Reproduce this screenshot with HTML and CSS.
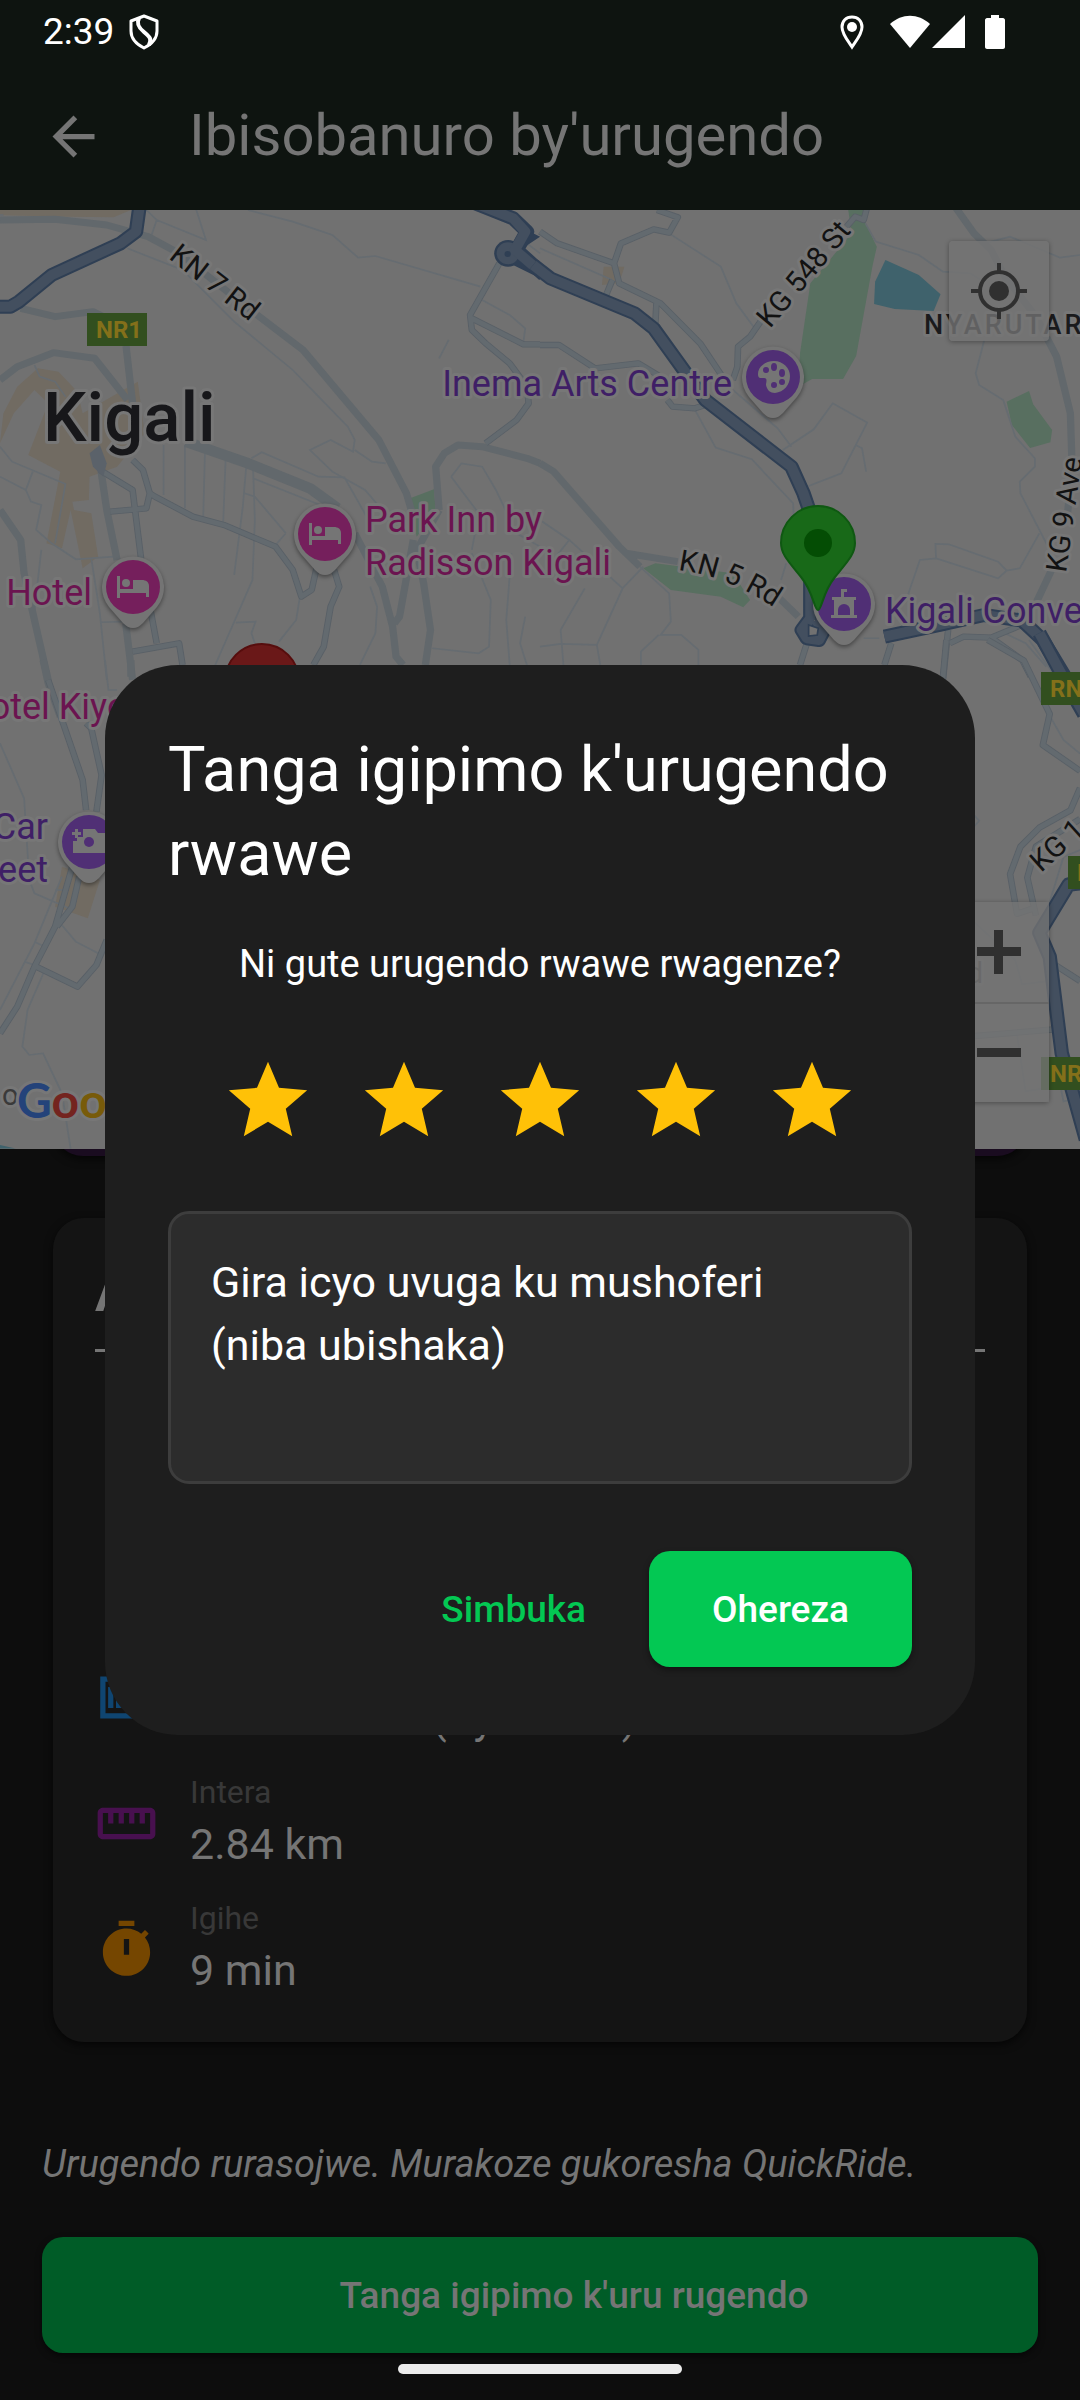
FILE: index.html
```html
<!DOCTYPE html>
<html lang="rw">
<head>
<meta charset="utf-8">
<meta name="viewport" content="width=device-width, initial-scale=1">
<title>Ibisobanuro by'urugendo</title>
<link rel="stylesheet" href="styles.css">
</head>
<body>
<div class="screen">
  <header class="top">
    <div class="status">
      <span class="status-time">2:39</span>
      <svg class="status-icon" width="30" height="36" viewBox="0 0 30 36" fill="none" stroke="#fff" stroke-width="3" stroke-linejoin="round"><path d="M15 2 2 7v10c0 8 5 13 13 17 8-4 13-9 13-17V7z"/><path d="M10 4c-3 6 0 10 5 14 6 5 8 7 5 13" stroke-width="4"/></svg>
      <span class="status-right">
        <svg width="24" height="36" viewBox="0 0 24 36"><path d="M12 3C6 3 2 7 2 13c0 7 6 14 10 20 4-6 10-13 10-20 0-6-4-10-10-10z" fill="none" stroke="#fff" stroke-width="3"/><circle cx="12" cy="13" r="5" fill="#fff"/></svg>
        <svg class="wifi" width="40" height="34" viewBox="0 0 40 34" fill="#fff"><path d="M20 33 0 9C12-2 28-2 40 9z"/></svg>
        <svg class="cell" width="34" height="34" viewBox="0 0 34 34" fill="#fff"><path d="M33 0v33H0z"/></svg>
        <svg class="battery" width="20" height="36" viewBox="0 0 20 36" fill="#fff"><path d="M6 1h8v3h4c1 0 2 1 2 2v27c0 1-1 2-2 2H2c-1 0-2-1-2-2V6c0-1 1-2 2-2h4z"/></svg>
      </span>
    </div>
    <div class="appbar">
      <button class="icon-btn" type="button" aria-label="Subira inyuma"><svg width="63" height="63" viewBox="0 0 24 24" fill="#757575"><path d="M20 11H7.83l5.59-5.59L12 4l-8 8 8 8 1.41-1.41L7.83 13H20v-2z"/></svg></button>
      <h1 class="appbar-title">Ibisobanuro by'urugendo</h1>
    </div>
  </header>

  <section class="map" aria-label="Ikarita">
    <svg class="map-svg" viewBox="0 210 1080 939">
      <defs>
        <path id="drop" d="M0 41C-4 41-7 39-10 36L-24 20A31 31 0 1 1 24 20L10 36C7 39 4 41 0 41z"/>
        <g id="bed" fill="#757575"><path d="M-16-11h3v13H0v-9H9c4 0 7 2 7 6v11h-3V6h-26v5h-3z"/><circle cx="-7" cy="-4" r="4"/></g>
        <path id="kn5" d="M678 570Q732 577 780 612"/>
      </defs>
      <rect y="210" width="1080" height="939" fill="#717171"/>

      <!-- north west -->
      <g transform="matrix(.3444 0 0 .3333 0 200)">
        <path class="tan" d="M0 30H380L330 52 200 50 0 46zM0 730 10 640 50 560 110 505 170 515 225 575 240 640 400 545 420 700 340 800 260 830 258 900 210 905 215 930 265 940 285 1070 240 1105 205 930 180 1045 135 1030 175 815 82 765 140 610 100 570 40 640z"/>
        <path class="park" d="M1185 897 1260 868 1265 930 1210 1010z"/>
        <path class="lane" d="M425 30 455 60 440 105M455 60 598 120 570 30M370 145 530 210 680 365 850 510 1010 680 1030 720 1025 755 960 720 900 750 965 815 1060 870 1110 930M720 30 850 65 965 105 1040 173 1090 168 1395 260M1400 300 1480 345 1525 385 1520 425M1030 750 1080 785 1120 790M475 735V885M537 735V925M595 760 590 955M655 780 648 970M715 800 705 920 680 1125M735 810 740 960 733 1140 625 1395M735 835 930 915M730 775 760 757 925 830 1000 832 1070 960M710 880 740 890 830 1000M0 740 35 785 190 852 160 1030M95 815 75 870 90 905 120 915 105 990 150 1030 220 1078 330 1070M0 830 75 870M120 1050 100 1230M265 1075 290 1240 310 1440M290 1267 360 1265M685 1268 742 1265 730 1300 740 1330M800 1035 830 1000M870 1195 860 1260 810 1325M1075 1160 1095 1220 1090 1300 1045 1395M1255 1345 1390 1360 1420 1340 1425 1200 1370 1060M1310 830 1340 790 1400 800 1440 870 1500 1000 1568 1040M1310 830 1390 940 1370 1050M1485 1060 1470 1260 1480 1395M1275 475 1303 420M100 495 115 530 160 545 190 590M0 45 10 45M1530 130 1568 160M1525 1250 1510 1330 1530 1395"/>
        <path class="road" d="M0 60 160 58 310 75 430 110 520 160 740 340 880 450 1100 720 1180 880 1200 950M60 325 160 350 270 335 300 350M0 540 50 500 155 458 275 475 370 600M366 438 385 610M290 790 310 930 340 1080M365 1270 385 1440M0 930 60 1020 70 1120 100 1260 140 1440M1030 1000 1110 1160 1140 1280 1150 1370 1170 1395M1200 1020 1160 1250 1145 1270M1275 930 1210 1050 1230 1150 1250 1290 1235 1395M1275 930 1265 800 1290 760 1330 735 1400 740 1530 775 1568 790"/>
        <path class="road wide" d="M540 725 720 790 900 865 980 925"/>
        <path class="street-case" d="M290 810 385 870 410 1080 455 1330M385 780 415 810 435 880 450 890 560 950 650 975 800 1040 850 1110 875 1190 905 1170 920 1100M320 935 425 925 435 880M385 1355 520 1330 530 1395M970 1110 985 1160 960 1220 940 1340 910 1395M1450 190 1365 345 1370 390 1410 430 1480 490 1530 560 1535 610 1500 660 1410 730M1370 355 1520 433 1568 433"/>
        <path class="street" d="M290 810 385 870 410 1080 455 1330M385 780 415 810 435 880 450 890 560 950 650 975 800 1040 850 1110 875 1190 905 1170 920 1100M320 935 425 925 435 880M385 1355 520 1330 530 1395M970 1110 985 1160 960 1220 940 1340 910 1395M1450 190 1365 345 1370 390 1410 430 1480 490 1530 560 1535 610 1500 660 1410 730M1370 355 1520 433 1568 433"/>
        <path d="M260 760 290 735 310 790 300 830 270 800z" fill="#5b626a"/>
        <path class="hwy-case" d="M405 20 395 95 350 130 150 225 55 305 30 320H0"/>
        <path class="hwy" d="M405 20 395 95 350 130 150 225 55 305 30 320H0"/>
        <path class="hwy-case" d="M1380 10 1490 55 1530 95 1500 150 1580 225"/>
        <circle cx="1475" cy="160" r="40" fill="#2f3f54"/>
        <path d="M1470 150 1530 90 1568 110 1510 150 1580 205 1568 235 1460 180z" fill="#2f3f54"/>
        <circle cx="1475" cy="160" r="33" fill="#434f5f"/>
        <path class="hwy" d="M1380 10 1490 55 1525 95 1495 150 1580 225"/>
        <circle cx="1474" cy="162" r="9" fill="#2f3f54"/>
      </g>

      <!-- north east -->
      <g transform="matrix(.3444 0 0 .3333 540 200)">
        <path class="tan" d="M185 200H245L230 250 180 255z"/>
        <path class="park" d="M895 30H955L945 70 978 140 965 200 918 468 880 537H790L750 560 755 460 785 250 905 100zM1355 605 1420 573 1432 613 1487 690 1482 727 1423 744 1370 675zM300 1105 335 1090 560 1120 610 1200 590 1222 525 1190 380 1170z"/>
        <path d="M1003 180 1100 225 1163 283 1143 333 1030 327 970 312 973 245z" fill="#3f626c"/>
        <path class="lane" d="M375 100 525 200 570 310 620 380M0 145 210 240M945 70 975 125 1100 165 1170 215 1250 220 1280 240M1290 130 1365 110 1510 173 1568 165M1290 420 1265 520 1275 555 1345 600 1380 710 1437 775V800L1393 845 1395 880 1480 1050M450 630 510 743 615 778 735 910 737 960M705 750 795 688 850 610 950 668 875 820 780 858M560 570 690 685 730 740M917 735 935 745 947 815M1450 1000 1393 1105 1355 1112 1330 1135 1150 1075 1148 1032 1187 1033 1330 1085 1355 1112M1150 1075 1103 1080 1060 1210M715 1090 700 1140M0 960 85 1020 240 1165M85 1020 0 1130M290 1100 375 1180 380 1265 350 1305H410L460 1350V1395M345 1305 293 1355V1395M300 1100 240 1165 165 1335 175 1395M130 1165 60 1290 68 1395M0 1340 60 1332 165 1335M1350 1300 1410 1330 1470 1400M940 1315H985"/>
        <path class="road" d="M1205 20 1260 100 1310 150 1350 230 1440 350 1500 470 1540 640 1545 800 1530 960M0 790 40 815 230 1040 290 1100M250 1060 400 1085M690 1190 750 1250M1490 1100 1440 1210"/>
        <path class="street-case" d="M0 95 50 130 215 190 230 250 350 310 465 430 530 530M215 190 235 130 330 88 375 98 400 52 340 30M210 240 190 290M338 310 335 370M0 435H55L160 505 285 490 350 530M640 365 610 410 575 440 573 500 560 540M950 20 940 60 915 50 890 80M370 600 385 620 450 625 480 615M775 1330 755 1395M1020 1330 1000 1395M1185 1290 1170 1440M1190 1330 1230 1310 1310 1313 1410 1270M1310 1313 1400 1380 1425 1430"/>
        <path class="street" d="M0 95 50 130 215 190 230 250 350 310 465 430 530 530M215 190 235 130 330 88 375 98 400 52 340 30M210 240 190 290M338 310 335 370M0 435H55L160 505 285 490 350 530M640 365 610 410 575 440 573 500 560 540M950 20 940 60 915 50 890 80M370 600 385 620 450 625 480 615M775 1330 755 1395M1020 1330 1000 1395M1185 1290 1170 1440M1190 1330 1230 1310 1310 1313 1410 1270M1310 1313 1400 1380 1425 1430"/>
        <path class="hwy-case" d="M-20 195 30 235 275 340 330 385 480 600 730 800 765 880 785 940V1260M785 1255 760 1290 775 1315 810 1320 825 1290 800 1260M1000 1310 1160 1275 1290 1245 1400 1262 1460 1320 1530 1440"/>
        <path class="hwy" d="M-20 195 30 235 275 340 330 385 480 600 730 800 765 880 785 940V1260M785 1255 760 1290 775 1315 810 1320 825 1290 800 1260M1000 1310 1160 1275 1290 1245 1400 1262 1460 1320 1530 1440"/>
        <path d="M780 1275 808 1285 805 1305 780 1308z" fill="#717171" stroke="#2f3f54" stroke-width="5"/>
      </g>

      <!-- south west -->
      <g transform="matrix(.3444 0 0 .3333 0 660)">
        <path class="tan" d="M180 620 290 660 255 775 160 740z"/>
        <path class="lane" d="M0 250 70 415 85 660 100 700 200 745M180 650 100 850 0 1050M160 690H200M130 930 80 1050 65 1160 85 1185 125 1180 180 1300 205 1466M175 790 220 845 285 880M305 0 315 90H340M100 845 130 860M70 905 100 915"/>
        <path class="road" d="M125 0 140 70 175 170M380 0V50"/>
        <path class="street-case" d="M140 60 180 180 240 360 250 450M250 190 265 205 295 345 280 455M210 620 160 800 100 920 50 1040 0 1120M230 650 210 740 165 800M105 920 225 980 280 915 310 840"/>
        <path class="street" d="M140 60 180 180 240 360 250 450M250 190 265 205 295 345 280 455M210 620 160 800 100 920 50 1040 0 1120M230 650 210 740 165 800M105 920 225 980 280 915 310 840"/>
        <path d="M0 1455 45 1466H0z" fill="#3f626c"/>
      </g>

      <!-- south east -->
      <g transform="matrix(.3444 0 0 .3444 540 640)">
        <path class="lane" d="M1420 0 1500 110 1550 200M1480 220 1520 290 1568 330M1262 510 1275 525 1262 540M1568 610 1520 630 1480 760M1262 820 1380 930 1400 1000 1480 990M1385 1145 1410 1310 1480 1300M1500 1240 1520 1340 1540 1335"/>
        <path class="street-case" d="M1180 0 1170 110M1300 0 1405 60 1480 215 1460 305 1568 380M1568 430 1540 495 1450 545 1395 600 1365 680 1385 795 1430 780M1568 520 1440 600 1415 690 1440 800M1262 1150 1500 1130M1490 940 1568 990"/>
        <path class="street" d="M1180 0 1170 110M1300 0 1405 60 1480 215 1460 305 1568 380M1568 430 1540 495 1450 545 1395 600 1365 680 1385 795 1430 780M1568 520 1440 600 1415 690 1440 800M1262 1150 1500 1130M1490 940 1568 990"/>
        <path class="hwy-case" d="M1450-20 1520 110 1580 215M1580 705 1535 710 1450 850 1480 920 1515 1200 1585 1450"/>
        <path class="hwy" d="M1450-20 1520 110 1580 215M1580 705 1535 710 1450 850 1480 920 1515 1200 1585 1450"/>
      </g>

      <g class="badge">
        <rect x="87" y="313" width="60" height="33"/><text x="96" y="338">NR1</text>
        <rect x="1041" y="672" width="60" height="33"/><text x="1050" y="697">RN</text>
        <rect x="1068" y="856" width="60" height="33"/><text x="1077" y="881">R</text>
        <rect x="1041" y="1057" width="60" height="33"/><text x="1050" y="1082">NR</text>
      </g>

      <g class="halo">
        <text class="city" x="43" y="441">Kigali</text>
        <g class="street-name">
          <text transform="translate(168 258) rotate(38)">KN 7 Rd</text>
          <text transform="translate(770 329) rotate(-50)">KG 548 St</text>
          <text><textPath href="#kn5">KN 5 Rd</textPath></text>
          <text transform="translate(1066 573) rotate(-82)">KG 9 Ave</text>
          <text transform="translate(1041 873) rotate(-42)">KG 1</text>
          <text x="983" y="983" text-anchor="end" opacity=".5">KG 7 Rd</text>
          <text class="faint" x="2" y="1105">o</text>
        </g>
        <text class="district" x="924" y="334">NYARUTARAMA</text>
        <g class="hotel">
          <text x="365" y="532">Park Inn by</text>
          <text x="365" y="575">Radisson Kigali</text>
          <text x="92" y="605" text-anchor="end">Hotel</text>
          <text x="-36" y="719">Hotel Kiyovu</text>
        </g>
        <g class="place">
          <text x="732" y="396" text-anchor="end">Inema Arts Centre</text>
          <text x="885" y="623">Kigali Convention</text>
          <text x="48" y="839" text-anchor="end">Car</text>
          <text x="48" y="882" text-anchor="end">Free Street</text>
        </g>
        <text class="brand" x="17" y="1118"><tspan fill="#24437a">G</tspan><tspan fill="#74241f">o</tspan><tspan fill="#785b0a">o</tspan><tspan fill="#24437a">g</tspan><tspan fill="#1f5a2f">l</tspan><tspan fill="#74241f">e</tspan></text>
      </g>

      <g class="pins">
        <g transform="translate(133 587)"><use href="#drop"/><circle r="27" fill="#751f5c"/><use href="#bed"/></g>
        <g transform="translate(325 534)"><use href="#drop"/><circle r="27" fill="#751f5c"/><use href="#bed"/></g>
        <g transform="translate(773 377)"><use href="#drop"/><circle r="27" fill="#502f75"/><path d="M1-16C-8-16-15-10-15-3-15 2-12 1-9 1-5 1-7 5-7 8-6 13-3 16 2 16 11 15 17 8 17-1 17-9 10-16 1-16z" fill="#757575"/><g fill="#502f75"><circle cx="-7" cy="-7" r="3"/><ellipse cx="1" cy="-10" rx="3" ry="4"/><ellipse cx="9" cy="-4" rx="3" ry="4"/><circle cx="9" cy="5" r="3"/><circle cx="1" cy="8" r="3"/></g></g>
        <g transform="translate(844 604)"><use href="#drop"/><circle r="27" fill="#502f75"/><path d="M-3-15h6v3h-3v5h12v3h-2v15h3v3h-26v-3h3V-4h-2v-3h9z" fill="#757575"/><path d="M-6 11V6a6 6 0 0 1 12 0v5z" fill="#502f75"/></g>
        <g transform="translate(89 842)"><use href="#drop"/><circle r="27" fill="#502f75"/><path d="M-16-1h4v-4h6v-8h12l3 4h8v20h-33zM-14-13h3v3h3v3h-3v3h-3v-3h-3v-3h3z" fill="#757575"/><circle r="5" fill="#502f75"/></g>
      </g>
      <g stroke-width="2">
        <path transform="translate(262 681)" d="M0 67C-4 67-4 50-17 34-30 18-37 11-37 0a37 37 0 1 1 74 0C37 11 30 18 17 34 4 50 4 67 0 67z" fill="#6a1818" stroke="#560d0d"/>
        <path transform="translate(818 543)" d="M0 67C-4 67-4 50-17 34-30 18-37 11-37 0a37 37 0 1 1 74 0C37 11 30 18 17 34 4 50 4 67 0 67z" fill="#186918" stroke="#0f5812"/>
        <circle cx="818" cy="543" r="14" fill="#044d04"/>
      </g>
    </svg>
    <button class="map-btn locate" type="button" aria-label="Aho ndi"><svg width="56" height="56" viewBox="0 0 56 56" fill="none" stroke="#303030" stroke-width="4"><circle cx="28" cy="28" r="19"/><circle cx="28" cy="28" r="10" fill="#303030" stroke="none"/><path d="M28 0v9M28 47v9M0 28h9M47 28h9"/></svg></button>
    <div class="zoom">
      <button class="map-btn" type="button" aria-label="Egereza"><svg width="44" height="44" viewBox="0 0 44 44" fill="#303030"><path d="M17 0h9v17h18v9H26v18h-9V26H0v-9h17z"/></svg></button>
      <button class="map-btn" type="button" aria-label="Hindura kure"><svg width="44" height="44" viewBox="0 0 44 44" fill="#303030"><path d="M0 17h44v9H0z"/></svg></button>
    </div>
  </section>

  <main class="content">
    <div class="peek"></div>
    <section class="card">
      <h2 class="card-title">Amakuru y'urugendo</h2>
      <hr class="divider">
      <ul class="rows">
        <li class="row"><svg class="row-icon" viewBox="0 0 24 24" fill="#1d5a2c"><circle cx="12" cy="12" r="8"/></svg><div><p class="row-label">Aho uvuye</p><p class="row-value">Kigali</p></div></li>
        <li class="row"><svg class="row-icon" viewBox="0 0 24 24" fill="#6a1818"><circle cx="12" cy="12" r="8"/></svg><div><p class="row-label">Aho ugiye</p><p class="row-value">Kigali</p></div></li>
        <li class="row"><svg class="row-icon" viewBox="0 0 24 24" fill="#0f4571"><path d="M5 8h2v8H5zM8 8h5v8H8zm2 2v4h1v-4zM14 8h5v8h-5zm2 2v4h1v-4zM2 4v16h20V4H2zm2 14V6h16v12H4z" fill-rule="evenodd"/></svg><div><p class="row-label">Igiciro</p><p class="row-value">150.00 RWF (Byamaze)</p></div></li>
        <li class="row"><svg class="row-icon" viewBox="0 0 24 24" fill="#48104f"><path d="M21 6H3c-1.1 0-2 .9-2 2v8c0 1.1.9 2 2 2h18c1.1 0 2-.9 2-2V8c0-1.1-.9-2-2-2zm0 10H3V8h2v4h2V8h2v4h2V8h2v4h2V8h2v4h2V8h2v8z"/></svg><div><p class="row-label">Intera</p><p class="row-value">2.84 km</p></div></li>
        <li class="row"><svg class="row-icon" viewBox="0 0 24 24" fill="#754600"><path d="M9 1h6v2H9zm10.03 6.39l1.42-1.42c-.43-.51-.9-.99-1.41-1.41l-1.42 1.42C16.07 4.74 14.12 4 12 4c-4.97 0-9 4.03-9 9s4.02 9 9 9 9-4.03 9-9c0-2.12-.74-4.07-1.97-5.61zM13 14h-2V8h2v6z"/></svg><div><p class="row-label">Igihe</p><p class="row-value">9 min</p></div></li>
      </ul>
    </section>
    <p class="thanks">Urugendo rurasojwe. Murakoze gukoresha QuickRide.</p>
    <button class="rate-btn" type="button">Tanga igipimo k'uru rugendo</button>
    <div class="home-bar"></div>
  </main>

  <div class="overlay">
    <form class="dialog" role="dialog" aria-modal="true" aria-labelledby="dialog-title">
      <h2 class="dialog-title" id="dialog-title">Tanga igipimo k'urugendo rwawe</h2>
      <p class="question">Ni gute urugendo rwawe rwagenze?</p>
      <div class="stars">
        <button class="star" type="button" aria-label="Inyenyeri 1"><svg viewBox="0 0 24 24"><path d="M12 17.27 18.18 21l-1.64-7.03L22 9.24l-7.19-.61L12 2 9.19 8.63 2 9.24l5.46 4.73L5.82 21z"/></svg></button>
        <button class="star" type="button" aria-label="Inyenyeri 2"><svg viewBox="0 0 24 24"><path d="M12 17.27 18.18 21l-1.64-7.03L22 9.24l-7.19-.61L12 2 9.19 8.63 2 9.24l5.46 4.73L5.82 21z"/></svg></button>
        <button class="star" type="button" aria-label="Inyenyeri 3"><svg viewBox="0 0 24 24"><path d="M12 17.27 18.18 21l-1.64-7.03L22 9.24l-7.19-.61L12 2 9.19 8.63 2 9.24l5.46 4.73L5.82 21z"/></svg></button>
        <button class="star" type="button" aria-label="Inyenyeri 4"><svg viewBox="0 0 24 24"><path d="M12 17.27 18.18 21l-1.64-7.03L22 9.24l-7.19-.61L12 2 9.19 8.63 2 9.24l5.46 4.73L5.82 21z"/></svg></button>
        <button class="star" type="button" aria-label="Inyenyeri 5"><svg viewBox="0 0 24 24"><path d="M12 17.27 18.18 21l-1.64-7.03L22 9.24l-7.19-.61L12 2 9.19 8.63 2 9.24l5.46 4.73L5.82 21z"/></svg></button>
      </div>
      <textarea class="comment" rows="3" aria-label="Gira icyo uvuga ku mushoferi" placeholder="Gira icyo uvuga ku mushoferi&#10;(niba ubishaka)"></textarea>
      <div class="actions">
        <button class="btn btn-text" type="button">Simbuka</button>
        <button class="btn btn-fill" type="submit">Ohereza</button>
      </div>
    </form>
  </div>
</div>
</body>
</html>
```
FILE: styles.css
```css
* { box-sizing: border-box; }

body,
h1,
h2,
p,
ul { margin: 0; padding: 0; }

body {
  background: #0d0d0d;
  color: #757575;
  font-family: Roboto, "Liberation Sans", sans-serif;
}

button {
  border: 0;
  padding: 0;
  background: none;
  font: inherit;
  color: inherit;
  cursor: pointer;
}

svg { display: block; }

.screen {
  position: relative;
  display: flex;
  flex-direction: column;
  min-height: 100vh;
}

/* Status bar and app bar */
.top { background: #0e1410; }

.status {
  display: flex;
  align-items: center;
  gap: 15px;
  height: 63px;
  padding: 0 75px 0 43px;
  color: #fff;
}

.status-time { font-size: 37px; }
.status-right { display: flex; align-items: center; margin-left: auto; }
.wifi { margin-left: 26px; }
.cell { margin-left: 2px; }
.battery { margin-left: 19px; }

.appbar {
  display: flex;
  align-items: center;
  gap: 84px;
  height: 147px;
  padding: 0 42px;
}

.appbar-title { font-size: 58px; line-height: 64px; font-weight: 400; padding-bottom: 4px; }

/* Map */
.map { position: relative; overflow: hidden; }
.map-svg { width: 100%; }

.tan { fill: #716b62; }
.park { fill: #586f60; }
.lane { fill: none; stroke: #666c71; stroke-width: 5; }
.road { fill: none; stroke: #62686c; stroke-width: 21; stroke-linejoin: round; }
.wide { stroke-width: 32; }
.street-case { fill: none; stroke: #596067; stroke-width: 19; stroke-linejoin: round; }
.street { fill: none; stroke: #636a6f; stroke-width: 14; stroke-linejoin: round; }
.hwy-case { fill: none; stroke: #2f3f54; stroke-width: 42; stroke-linejoin: round; }
.hwy { fill: none; stroke: #434f5f; stroke-width: 30; stroke-linejoin: round; }

.badge { fill: #324f1f; font-size: 24px; font-weight: 700; }
.badge text { fill: #84701a; }

.halo text { paint-order: stroke; stroke: #777; stroke-width: 6px; stroke-linejoin: round; }
.city { fill: #17171a; font-size: 69px; font-weight: 500; }
.street-name { fill: #121212; font-size: 29px; }
.faint { fill: #3a3a3a; }
.district { fill: #1a1a1c; font-size: 27px; font-weight: 500; letter-spacing: 3px; }
.hotel { fill: #6b1450; font-size: 36px; }
.place { fill: #3f1f66; font-size: 36px; }
.brand { font-family: Lato, sans-serif; font-size: 48px; font-weight: 700; }

.pins { fill: #747474; filter: drop-shadow(0 2px 2px #0006); }

.map-btn {
  display: grid;
  place-items: center;
  width: 100px;
  height: 100px;
  background: #747474c8;
}

.locate {
  position: absolute;
  top: 31px;
  right: 31px;
  border-radius: 4px;
  box-shadow: 0 1px 5px #0005;
}

.zoom {
  position: absolute;
  right: 31px;
  bottom: 47px;
  border-radius: 4px;
  box-shadow: 0 1px 5px #0005;
}

.zoom .map-btn + .map-btn { border-top: 2px solid #666; }

/* Trip details */
.content {
  position: relative;
  flex: 1;
  display: flex;
  flex-direction: column;
  overflow: hidden;
  padding: 0 42px 47px;
}

.peek {
  height: 60px;
  margin: -53px 11px 0;
  border-radius: 31px;
  background: #1a0c20;
  box-shadow: 0 3px 8px #000a;
}

.card {
  margin: 62px 11px 0;
  padding: 42px 42px 40px;
  border-radius: 31px;
  background: #141414;
  box-shadow: 0 3px 8px #000a;
}

.card-title { font-size: 52px; line-height: 68px; font-weight: 700; }

.divider { margin: 21px 0 20px; border: 0; height: 3px; background: #757575; }

.rows { list-style: none; }
.row { display: flex; align-items: center; gap: 32px; padding-top: 21px; }
.row-icon { width: 63px; height: 63px; }
.row-label { color: #383838; font-size: 32px; line-height: 42px; }
.row-value { font-size: 43px; line-height: 63px; }

.thanks {
  margin-top: auto;
  padding-top: 42px;
  font-size: 38px;
  line-height: 52px;
  font-style: italic;
}

.rate-btn {
  height: 116px;
  margin-top: 47px;
  padding-left: 68px;
  border-radius: 21px;
  background: #005c27;
  box-shadow: 0 3px 6px #0008;
  font-size: 37px;
  font-weight: 500;
}

.home-bar {
  position: absolute;
  bottom: 26px;
  left: 50%;
  width: 284px;
  height: 10px;
  margin-left: -142px;
  border-radius: 5px;
  background: #ebebeb;
}

/* Rating dialog */
.overlay {
  position: absolute;
  inset: 0;
  display: flex;
  align-items: center;
  justify-content: center;
  padding: 0 105px;
}

.dialog {
  display: flex;
  flex-direction: column;
  width: 100%;
  padding: 63px 63px 68px;
  border-radius: 73px;
  background: #1e1e1e;
  color: #fff;
}

.dialog-title { font-size: 63px; line-height: 84px; font-weight: 400; }

.question {
  margin-top: 42px;
  font-size: 38px;
  line-height: 53px;
  text-align: center;
}

.stars { display: flex; justify-content: center; margin-top: 42px; }
.star { padding: 21px; }
.star svg { width: 94px; height: 94px; fill: #ffc107; }

.comment {
  height: 273px;
  margin-top: 42px;
  padding: 37px 40px;
  border: 3px solid #3d3d3d;
  border-radius: 21px;
  background: #2c2c2c;
  color: #fff;
  font: 400 43px/63px Roboto, "Liberation Sans", sans-serif;
  resize: none;
}

.comment::placeholder { color: #fff; opacity: 1; }

.actions { display: flex; justify-content: flex-end; gap: 21px; margin-top: 67px; }

.btn {
  height: 116px;
  border-radius: 21px;
  font-size: 37px;
  font-weight: 500;
}

.btn-text { padding: 0 42px; color: #03c853; }
.btn-fill { padding: 0 63px; background: #03c853; box-shadow: 0 3px 6px #0006; }
```
